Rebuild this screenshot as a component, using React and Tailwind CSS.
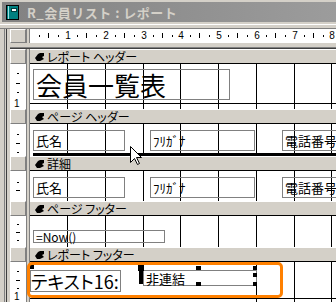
import React from 'react'

const JP = "font-['Noto_Sans_CJK_JP',sans-serif]"

// 1cm grid cells starting at x=30
const COLS = ['w-[38px]', 'w-[38px]', 'w-[38px]', 'w-[37px]', 'w-[38px]', 'w-[38px]', 'w-[38px]', 'w-[37px]']

const Sep = () => (
  <div className="flex shrink-0">
    <div className="w-px bg-[#808080]" />
    <div className="w-[2px] bg-[#d4d0c8]" />
    <div className="w-px bg-[#808080]" />
  </div>
)

const Raised = ({ className = '' }) => (
  <div className={`w-[16px] shrink-0 border border-t-white border-l-white border-r-[#808080] border-b-[#808080] bg-[#d4d0c8] ${className}`} />
)

function Grid({ hide = 0, line }) {
  return (
    <div className="absolute inset-0">
      <div className="flex h-full">
        {COLS.map((w, i) => (
          <div key={i} className={`${w} h-full shrink-0 border-r ${i < hide ? 'border-transparent' : 'border-black'}`} />
        ))}
      </div>
      {line && <div className={`absolute left-0 right-0 h-px bg-black ${line}`} />}
    </div>
  )
}

function VMarks({ marks }) {
  return marks.map(([top, kind], i) =>
    kind === 'n' ? (
      <span key={i} className={`absolute left-[4px] font-['Liberation_Sans',sans-serif] text-[10px] leading-none ${top}`}>1</span>
    ) : (
      <div key={i} className={`absolute h-px bg-black ${kind === 'd' ? 'left-[6px] w-[4px]' : 'left-[7px] w-[2px]'} ${top}`} />
    )
  )
}

function Row({ h, marks, children }) {
  return (
    <div className={`flex ${h}`}>
      <div className="relative w-[16px] shrink-0 bg-white">
        <VMarks marks={marks} />
      </div>
      <Sep />
      <div className="relative flex-1 bg-white">{children}</div>
    </div>
  )
}

const Arrow = () => (
  <svg width="9" height="8" viewBox="0 0 9 8">
    <path d="M0 5 L3 1 L5 0 L9 0 L9 3 L7 4 L9 6 L5 8 L2 8 Z" fill="#000" />
  </svg>
)

function Band({ label }) {
  return (
    <div className="flex h-[15px]">
      <Raised />
      <Sep />
      <div className={`flex flex-1 items-center gap-[3px] border-t border-b border-t-white border-b-black bg-[#d4d0c8] pl-[5px] text-[12px] text-black ${JP}`}>
        <Arrow />
        <span className="leading-none [font-feature-settings:'palt']">{label}</span>
      </div>
    </div>
  )
}

const Box = ({ className, text, textClass = 'text-[13px]' }) => (
  <div className={`absolute flex items-center border border-[#808080] px-[2px] leading-none ${JP} ${textClass} ${className}`}>
    <span>{text}</span>
  </div>
)

const Fields = ({ top }) => (
  <>
    <Box className={`${top} left-[3px] h-[21px] w-[92px]`} text="氏名" />
    <Box className={`${top} left-[120px] h-[21px] w-[105px]`} text="ﾌﾘｶﾞﾅ" />
    <Box className={`${top} left-[252px] h-[21px] w-[80px]`} text="電話番号" />
  </>
)

const Handle = ({ className }) => <div className={`absolute bg-black ${className}`} />

const marks4 = [['top-[9px]', 's'], ['top-[19px]', 'd'], ['top-[28px]', 's']]

export default function App() {
  return (
    <div className="relative h-[302px] w-[336px] overflow-hidden bg-[#d4d0c8] text-black">
      {/* title bar */}
      <div className="border-l-2 border-t-2 border-[#d4d0c8]">
        <div className="flex h-[20px] items-center gap-[7px] bg-gradient-to-r from-[#828282] to-[#9c9c9c] pl-[3px]">
          <svg width="15" height="15" viewBox="0 0 15 15">
            <rect x="1.5" y="0.5" width="12" height="14" fill="#008080" stroke="#000" />
            <rect x="3" y="1" width="1" height="13" fill="#9fe0e0" />
            <rect x="6.5" y="3.5" width="5" height="3" fill="#fff" stroke="#004040" />
          </svg>
          <span className={`text-[13px] font-bold leading-none tracking-[0.5px] text-[#d4d0c8] ${JP}`}>R_会員リスト : レポート</span>
        </div>
      </div>
      {/* frame */}
      <div className="h-[2px] bg-[#d4d0c8]" />
      <div className="h-px bg-white" />
      <div className="h-[3px] bg-[#d4d0c8]" />
      <div className="h-px bg-[#808080]" />

      <div className="flex">
        {/* left window frame */}
        <div className="flex w-[10px] shrink-0">
          <div className="w-[4px] bg-[#d4d0c8]" />
          <div className="w-px bg-[#808080]" />
          <div className="w-px bg-[#d4d0c8]" />
          <div className="w-px bg-[#404040]" />
          <div className="w-[3px] bg-[#d4d0c8]" />
        </div>

        <div className="flex-1">
          {/* ruler */}
          <div className="flex h-[14px]">
            <Raised />
            <Sep />
            <div className="flex flex-1 bg-white">
              {COLS.map((w, i) => (
                <div key={i} className={`relative shrink-0 ${w}`}>
                  <div className="absolute left-[9px] top-[6px] h-[2px] w-px bg-black" />
                  <div className="absolute left-[18px] top-[4px] h-[5px] w-px bg-black" />
                  <div className="absolute left-[28px] top-[6px] h-[2px] w-px bg-black" />
                  <span className="absolute right-0 top-[2px] translate-x-1/2 font-['Liberation_Sans',sans-serif] text-[10px] leading-none">
                    {i + 1}
                  </span>
                </div>
              ))}
            </div>
          </div>
          <div className="h-[4px] bg-[#d4d0c8]" />
          <div className="h-px bg-[#808080]" />
          <div className="h-px bg-[#404040]" />

          {/* report header */}
          <Band label="レポート ヘッダー" />
          <Row h="h-[45px]" marks={[...marks4, ['top-[35px]', 'n']]}>
            <Grid line="top-[39px]" />
            <div className={`absolute left-[3px] top-[5px] flex h-[31px] w-[197px] items-center border border-[#808080] pl-[2px] text-[26px] leading-none ${JP}`}>
              会員一覧表
            </div>
          </Row>

          {/* page header */}
          <Band label="ページ ヘッダー" />
          <Row h="h-[32px]" marks={[['top-[10px]', 's'], ['top-[19px]', 'd'], ['top-[28px]', 's']]}>
            <Grid />
            <Fields top="top-[6px]" />
            <div className="absolute left-[3px] right-0 top-[29px] h-[3px] bg-black" />
            <svg className="absolute left-[100px] top-[22px] z-10" width="12" height="20" viewBox="0 0 12 20">
              <path d="M0.5 0.5 L0.5 16.5 L4.5 12.5 L7.5 18.5 L9.5 17.5 L6.5 11.5 L11.5 11.5 Z" fill="#fff" stroke="#000" />
            </svg>
          </Row>

          {/* detail */}
          <Band label="詳細" />
          <Row h="h-[30px]" marks={[['top-[11px]', 's'], ['top-[19px]', 'd']]}>
            <Grid />
            <Fields top="top-[6px]" />
          </Row>

          {/* page footer */}
          <Band label="ページ フッター" />
          <Row h="h-[31px]" marks={[['top-[8px]', 's'], ['top-[16px]', 'd'], ['top-[24px]', 's']]}>
            <Grid />
            <Box className="left-[3px] top-[14px] h-[13px] w-[132px]" text="=Now()" textClass="text-[12px]" />
          </Row>

          {/* report footer */}
          <Band label="レポート フッター" />
          <Row h="h-[40px]" marks={[['top-[9px]', 's'], ['top-[18px]', 'd'], ['top-[26px]', 's'], ['top-[30px]', 'n']]}>
            <Grid hide={5} line="top-[36px]" />
            <div className={`absolute left-0 top-[8px] flex h-[22px] w-[91px] items-center border border-[#808080] text-[18px] leading-none [font-feature-settings:'palt'] ${JP}`}>
              テキスト16:
            </div>
            <div className={`absolute left-[113px] top-[8px] flex h-[16px] w-[114px] items-center border border-[#808080] pl-[2px] text-[13px] leading-none ${JP}`}>
              非連結
            </div>
            <Handle className="-left-[1px] top-px h-[6px] w-[5px]" />
            <Handle className="left-[108px] top-px h-[8px] w-[6px]" />
            <Handle className="left-[109px] top-[9px] h-[13px] w-[4px]" />
            <Handle className="left-[166px] top-[4px] h-[4px] w-[5px]" />
            <Handle className="left-[166px] top-[20px] h-[4px] w-[5px]" />
            <Handle className="left-[223px] top-[4px] h-[4px] w-[4px]" />
            <Handle className="left-[223px] top-[11px] h-[4px] w-[4px]" />
            <Handle className="left-[223px] top-[20px] h-[4px] w-[4px]" />
            <div className="absolute -left-[3px] top-0 h-[36px] w-[256px] rounded-[5px] border-[3px] border-[#ff8000]" />
          </Row>
        </div>
      </div>
    </div>
  )
}
